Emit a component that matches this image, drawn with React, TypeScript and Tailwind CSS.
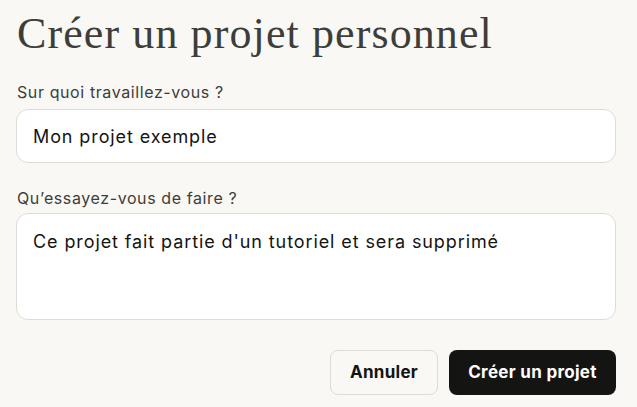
export default function App() {
  return (
    <div className="w-[637px] h-[407px] bg-[#f9f8f5] px-4 pt-[6px] font-['Inter',sans-serif] text-[#141413]">
      <h1 className="font-['Liberation_Serif',serif] text-[44px] leading-[56px] text-[#3d3d3a] pl-[1px] tracking-[1.1px]">Créer un projet personnel</h1>
      <div className="mt-[20px] text-[16px] leading-[20px] tracking-[0.6px] text-[#3d3d3a] pl-[1px]">Sur quoi travaillez-vous ?</div>
      <div className="mt-[7px] h-[54px] w-[600px] rounded-[12px] border border-[#dedcd6] bg-white flex items-center px-4 text-[18px] tracking-[0.9px]">Mon projet exemple</div>
      <div className="mt-[25px] text-[16px] leading-[20px] tracking-[0.6px] text-[#3d3d3a] pl-[1px]">Qu’essayez-vous de faire ?</div>
      <div className="mt-[5px] h-[107px] w-[600px] rounded-[12px] border border-[#dedcd6] bg-white px-4 pt-[16px] text-[18px] leading-[24px] tracking-[0.9px]">Ce projet fait partie d'un tutoriel et sera supprimé</div>
      <div className="mt-[30px] w-[600px] flex justify-end gap-[11px]">
        <button className="h-[45px] w-[108px] rounded-[8px] border border-[#dedcd6] bg-[#f9f8f5] text-[17px] font-bold tracking-[0.3px]">Annuler</button>
        <button className="h-[45px] w-[167px] rounded-[8px] bg-[#141413] text-white text-[17px] font-bold tracking-[0.3px]">Créer un projet</button>
      </div>
    </div>
  );
}
